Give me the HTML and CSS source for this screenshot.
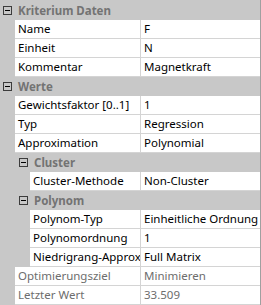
FILE: index.html
```html
<!DOCTYPE html>
<html lang="de">
<head>
    <meta charset="UTF-8">
    <title>Eigenschaften</title>
    <link rel="stylesheet" href="styles.css">
</head>
<body>
    <div class="grid">
        <div class="cat"><span class="toggle"></span>Kriterium Daten</div>
        <div class="row"><div class="label">Name</div><div class="value">F</div></div>
        <div class="row"><div class="label">Einheit</div><div class="value">N</div></div>
        <div class="row"><div class="label">Kommentar</div><div class="value">Magnetkraft</div></div>

        <div class="cat"><span class="toggle"></span>Werte</div>
        <div class="row"><div class="label">Gewichtsfaktor [0..1]</div><div class="value">1</div></div>
        <div class="row"><div class="label">Typ</div><div class="value">Regression</div></div>
        <div class="row"><div class="label">Approximation</div><div class="value">Polynomial</div></div>

        <div class="cat sub"><span class="toggle"></span>Cluster</div>
        <div class="row sub"><div class="label">Cluster-Methode</div><div class="value">Non-Cluster</div></div>

        <div class="cat sub"><span class="toggle"></span>Polynom</div>
        <div class="row sub"><div class="label">Polynom-Typ</div><div class="value">Einheitliche Ordnung</div></div>
        <div class="row sub"><div class="label">Polynomordnung</div><div class="value">1</div></div>
        <div class="row sub"><div class="label">Niedrigrang-Approximation</div><div class="value">Full Matrix</div></div>

        <div class="row readonly"><div class="label">Optimierungsziel</div><div class="value">Minimieren</div></div>
        <div class="row readonly"><div class="label">Letzter Wert</div><div class="value">33.509</div></div>
    </div>
</body>
</html>
```

FILE: styles.css
```css
body {
    margin: 0;
    font-family: "Noto Sans", sans-serif;
    font-size: 11.5px;
    background: #ffffff;
}
.grid {
    width: 260px;
    padding-top: 1px;
    background: #c8c8c8;
    border-right: 1px solid #a0a0a0;
}
.cat {
    display: flex;
    align-items: center;
    height: 19px;
    padding-left: 3px;
    font-weight: bold;
    color: #737373;
}
.cat.sub {
    padding-left: 19px;
}
.toggle {
    position: relative;
    box-sizing: border-box;
    width: 9px;
    height: 9px;
    border: 1px solid #3c3c3c;
    margin-right: 6px;
}
.toggle::after {
    content: "";
    position: absolute;
    left: 1px;
    top: 3px;
    width: 5px;
    height: 1px;
    background: #000;
}
.row {
    display: flex;
    height: 19px;
    padding-left: 15px;
}
.row.sub {
    padding-left: 30px;
}
.label, .value {
    box-sizing: border-box;
    background: #ffffff;
    border-bottom: 1px solid #d4d4d4;
    padding-left: 3px;
    line-height: 18px;
    white-space: nowrap;
    overflow: hidden;
    color: #000;
}
.label {
    flex: 1;
    border-right: 1px solid #d4d4d4;
}
.value {
    width: 119px;
    flex: none;
}
.readonly .label, .readonly .value {
    color: #6d6d6d;
}
```
